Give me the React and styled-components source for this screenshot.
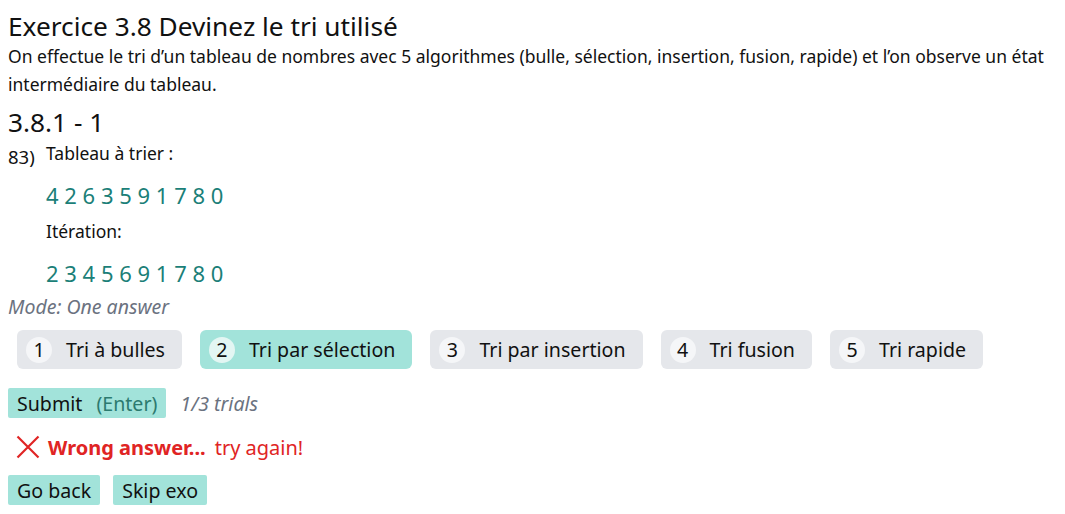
import React from 'react';
import styled, { createGlobalStyle } from 'styled-components';

const GlobalStyles = createGlobalStyle`
	body {
		margin: 8px;
		font-family: "Noto Sans", "Open Sans", sans-serif;
		font-size: 17.5px;
		color: #111;
		background: #fff;
	}
`;

const choices = [
	'Tri à bulles',
	'Tri par sélection',
	'Tri par insertion',
	'Tri fusion',
	'Tri rapide',
];

export default function App() {
	const selected = 1;

	return (
		<>
			<GlobalStyles />
			<PageUI>
				<TitleUI>Exercice 3.8 Devinez le tri utilisé</TitleUI>
				<IntroUI>
					On effectue le tri d’un tableau de nombres avec 5 algorithmes (bulle,
					sélection, insertion, fusion, rapide) et l’on observe un état
					intermédiaire du tableau.
				</IntroUI>
				<SubTitleUI>3.8.1 - 1</SubTitleUI>
				<QuestionUI>
					<QuestionNumberUI>83)</QuestionNumberUI>
					<QuestionBodyUI>
						<LabelUI>Tableau à trier :</LabelUI>
						<ArrayUI>4 2 6 3 5 9 1 7 8 0</ArrayUI>
						<LabelUI>Itération:</LabelUI>
						<ArrayUI>2 3 4 5 6 9 1 7 8 0</ArrayUI>
					</QuestionBodyUI>
				</QuestionUI>
				<ModeUI>Mode: One answer</ModeUI>
				<ChoicesUI>
					{ choices.map( ( label, i ) => (
						<ChoiceUI key={ label } $active={ i === selected }>
							<ChoiceNumberUI $active={ i === selected }>{ i + 1 }</ChoiceNumberUI>
							{ label }
						</ChoiceUI>
					) ) }
				</ChoicesUI>
				<SubmitRowUI>
					<ActionButtonUI>
						Submit <KeyHintUI>(Enter)</KeyHintUI>
					</ActionButtonUI>
					<TrialsUI>1/3 trials</TrialsUI>
				</SubmitRowUI>
				<FeedbackUI>
					<svg width="24" height="24" viewBox="0 0 24 24">
						<path
							d="M1.5 1.5 L22.5 22.5 M22.5 1.5 L1.5 22.5"
							stroke="#e02424"
							strokeWidth="2.2"
							fill="none"
						/>
					</svg>
					<strong>Wrong answer...</strong>
					<span>try again!</span>
				</FeedbackUI>
				<ButtonsRowUI>
					<ActionButtonUI>Go back</ActionButtonUI>
					<ActionButtonUI>Skip exo</ActionButtonUI>
				</ButtonsRowUI>
			</PageUI>
		</>
	);
}

const PageUI = styled.div`
	display: flex;
	flex-direction: column;
`;

const TitleUI = styled.h2`
	margin: 0;
	font-size: 26.25px;
	font-weight: 400;
	line-height: normal;
`;

const IntroUI = styled.p`
	margin: -2px 0 6px;
	line-height: 28px;
`;

const SubTitleUI = styled.h3`
	margin: 0 0 -1px;
	font-size: 26.25px;
	font-weight: 400;
	line-height: normal;
`;

const QuestionUI = styled.div`
	display: flex;
	align-items: flex-start;
`;

const QuestionNumberUI = styled.span`
	width: 38px;
	flex-shrink: 0;
	font-size: 18.5px;
	line-height: 28px;
	padding-top: 4px;
`;

const QuestionBodyUI = styled.div`
	display: flex;
	flex-direction: column;
`;

const LabelUI = styled.div`
	line-height: 28px;
`;

const ArrayUI = styled.div`
	font-size: 22px;
	line-height: 30px;
	color: #1b7f78;
	margin: 13px 0 7px;
`;

const ModeUI = styled.div`
	font-size: 19.5px;
	font-style: italic;
	color: #6b7280;
	line-height: 28px;
	margin-top: -2px;
`;

const ChoicesUI = styled.div`
	display: flex;
	flex-wrap: wrap;
	gap: 18px;
	padding: 9px 9px 0;
`;

const ChoiceUI = styled.div`
	display: flex;
	align-items: center;
	gap: 14px;
	height: 39px;
	padding: 0 17px 0 9px;
	border-radius: 6px;
	background: ${ ( p ) => ( p.$active ? '#a2e3da' : '#e5e7eb' ) };
	font-size: 19.6px;
	cursor: pointer;
`;

const ChoiceNumberUI = styled.span`
	display: flex;
	align-items: center;
	justify-content: center;
	width: 26px;
	height: 26px;
	border-radius: 50%;
	background: ${ ( p ) => ( p.$active ? '#e3f6f3' : '#f5f6f8' ) };
	font-size: 19.6px;
`;

const SubmitRowUI = styled.div`
	display: flex;
	align-items: center;
	gap: 14px;
	margin-top: 19px;
`;

const ActionButtonUI = styled.button`
	display: flex;
	align-items: center;
	gap: 14px;
	height: 30px;
	padding: 0 9px;
	border: 0;
	border-radius: 2px;
	background: #a2e3da;
	font-family: inherit;
	font-size: 19.6px;
	color: #111;
	cursor: pointer;
`;

const KeyHintUI = styled.span`
	color: #2c7a6f;
`;

const TrialsUI = styled.span`
	font-size: 19.6px;
	font-style: italic;
	color: #6b7280;
`;

const FeedbackUI = styled.div`
	display: flex;
	align-items: center;
	gap: 8px;
	height: 30px;
	margin: 14px 0 13px;
	padding-left: 8px;
	font-size: 20px;
	color: #e02424;

	strong {
		font-weight: 700;
		margin-right: 1px;
	}
`;

const ButtonsRowUI = styled.div`
	display: flex;
	gap: 13px;
`;
